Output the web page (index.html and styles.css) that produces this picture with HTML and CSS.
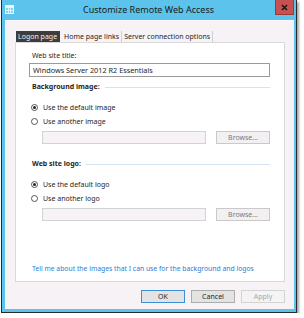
FILE: index.html
```html
<!DOCTYPE html>
<html>
<head>
<meta charset="utf-8">
<link rel="stylesheet" href="styles.css">
</head>
<body>
<div class="window">
  <div class="titlebar">
    <svg class="appicon" width="9" height="9" viewBox="0 0 9 9">
      <rect x="0.5" y="0.5" width="8" height="8" fill="#7fd3f3" stroke="#e8f7fd" stroke-width="1"/>
      <rect x="1" y="1" width="7" height="2" fill="#e8f7fd"/>
      <line x1="3.5" y1="3" x2="3.5" y2="8" stroke="#e8f7fd" stroke-width="0.8"/>
      <line x1="5.5" y1="3" x2="5.5" y2="8" stroke="#e8f7fd" stroke-width="0.8"/>
      <line x1="1" y1="5.5" x2="8" y2="5.5" stroke="#e8f7fd" stroke-width="0.8"/>
    </svg>
    <div class="title">Customize Remote Web Access</div>
    <div class="close">
      <svg width="7" height="7" viewBox="0 0 7 7"><path d="M1 1 L6 6 M6 1 L1 6" stroke="#1a1a1a" stroke-width="1.6"/></svg>
    </div>
  </div>
  <div class="content">
    <div class="tabs">
      <div class="tab selected">Logon page</div>
      <div class="tab">Home page links</div>
      <div class="tab">Server connection options</div>
    </div>
    <div class="panel">
      <div class="label">Web site title:</div>
      <div class="input">Windows Server 2012 R2 Essentials</div>

      <div class="section s1"><span class="section-title">Background image:</span><span class="rule"></span></div>
      <div class="radio r1"><span class="dot checked"></span>Use the default image</div>
      <div class="radio"><span class="dot"></span>Use another image</div>
      <div class="filerow"><div class="filebox"></div><div class="browse">Browse...</div></div>

      <div class="section s2"><span class="section-title">Web site logo:</span><span class="rule"></span></div>
      <div class="radio r2"><span class="dot checked"></span>Use the default logo</div>
      <div class="radio"><span class="dot"></span>Use another logo</div>
      <div class="filerow"><div class="filebox"></div><div class="browse">Browse...</div></div>

      <div class="link">Tell me about the images that I can use for the background and logos</div>
    </div>
    <div class="buttons">
      <div class="btn default">OK</div>
      <div class="btn">Cancel</div>
      <div class="btn disabled">Apply</div>
    </div>
  </div>
</div>
</body>
</html>
```
FILE: styles.css
```css
html, body {
  margin: 0;
  padding: 0;
  background: #ffffff;
}
body {
  font-family: "Segoe UI", "Noto Sans", "Liberation Sans", sans-serif;
  font-size: 7px;
  color: #1e1e1e;
}
.window {
  margin-left: 1px;
  width: 296px;
  background: #5cc4ec;
  border: 1px solid #2b2b2b;
  border-top: 0;
  padding: 0 2px 3px 3px;
  box-sizing: border-box;
  box-shadow: 2px 2px 2px rgba(0, 0, 0, 0.35);
}
.titlebar {
  height: 20px;
  display: flex;
  align-items: flex-start;
}
.appicon {
  margin-top: 5px;
  display: block;
}
.title {
  flex: 1;
  text-align: center;
  font-size: 9px;
  line-height: 20px;
  color: #1a1a1a;
  padding-left: 8px;
}
.close {
  width: 19px;
  height: 15px;
  background: #c75050;
  border: 1px solid #9b3a3a;
  border-top: 0;
  box-sizing: border-box;
  display: flex;
  align-items: center;
  justify-content: center;
}
.content {
  background: #f6f2f6;
  border-top: 1px solid #fbf9fb;
  padding: 10px 9px 6px 10px;
  height: 289px;
  box-sizing: border-box;
}
.tabs {
  display: flex;
  height: 11px;
  margin-left: 1px;
}
.tab {
  line-height: 11px;
  padding: 0 2px;
  border-right: 1px solid #cfcfcf;
  white-space: nowrap;
}
.tab.selected {
  background: #3d3d3d;
  color: #f2f2f2;
  padding: 0 3px 0 2px;
  border-right: 0;
  margin-right: 2px;
}
.panel {
  background: #ffffff;
  border: 1px solid #dadada;
  height: 240px;
  box-sizing: border-box;
  padding: 8px 14px 0 13px;
}
.label {
  line-height: 10px;
  padding-left: 3px;
}
.input {
  margin-top: 2px;
  height: 14px;
  border: 1px solid #9a9a9a;
  box-sizing: border-box;
  line-height: 12px;
  padding-left: 3px;
  font-size: 7.3px;
}
.section {
  display: flex;
  align-items: center;
  line-height: 10px;
  padding-left: 3px;
}
.s1 { margin-top: 5px; }
.s2 { margin-top: 15px; }
.section-title {
  font-weight: bold;
  white-space: nowrap;
}
.rule {
  flex: 1;
  height: 1px;
  background: #d3e3f1;
  margin-left: 5px;
}
.radio {
  display: flex;
  align-items: center;
  height: 14px;
}
.r1 { margin-top: 8px; }
.r2 { margin-top: 8px; }
.dot {
  width: 7px;
  height: 7px;
  border: 1px solid #555;
  border-radius: 50%;
  box-sizing: border-box;
  background: #fff;
  margin-left: 2px;
  margin-right: 5px;
  position: relative;
}
.dot.checked::after {
  content: "";
  position: absolute;
  left: 1px;
  top: 1px;
  width: 3px;
  height: 3px;
  border-radius: 50%;
  background: #222;
}
.filerow {
  display: flex;
  margin-top: 3px;
  margin-left: 13px;
  height: 13px;
}
.filebox {
  width: 164px;
  background: #f6f2f6;
  border: 1px solid #d2d2d2;
  box-sizing: border-box;
}
.browse {
  margin-left: auto;
  width: 54px;
  background: #f2f0f2;
  border: 1px solid #c9c9c9;
  box-sizing: border-box;
  color: #7a7a7a;
  text-align: center;
  line-height: 11px;
}
.link {
  margin-top: 43px;
  line-height: 10px;
  padding-left: 3px;
  color: #2f7bd3;
  white-space: nowrap;
  font-size: 6.8px;
}
.buttons {
  display: flex;
  justify-content: flex-end;
  gap: 6px;
  margin-top: 8px;
}
.btn {
  width: 44px;
  height: 13px;
  box-sizing: border-box;
  background: #e3e3e3;
  border: 1px solid #adadad;
  text-align: center;
  line-height: 11px;
}
.btn.default {
  border-color: #3b8fd8;
}
.btn.disabled {
  background: #f4f4f4;
  border-color: #d3d3d3;
  color: #a8a8a8;
}
```
